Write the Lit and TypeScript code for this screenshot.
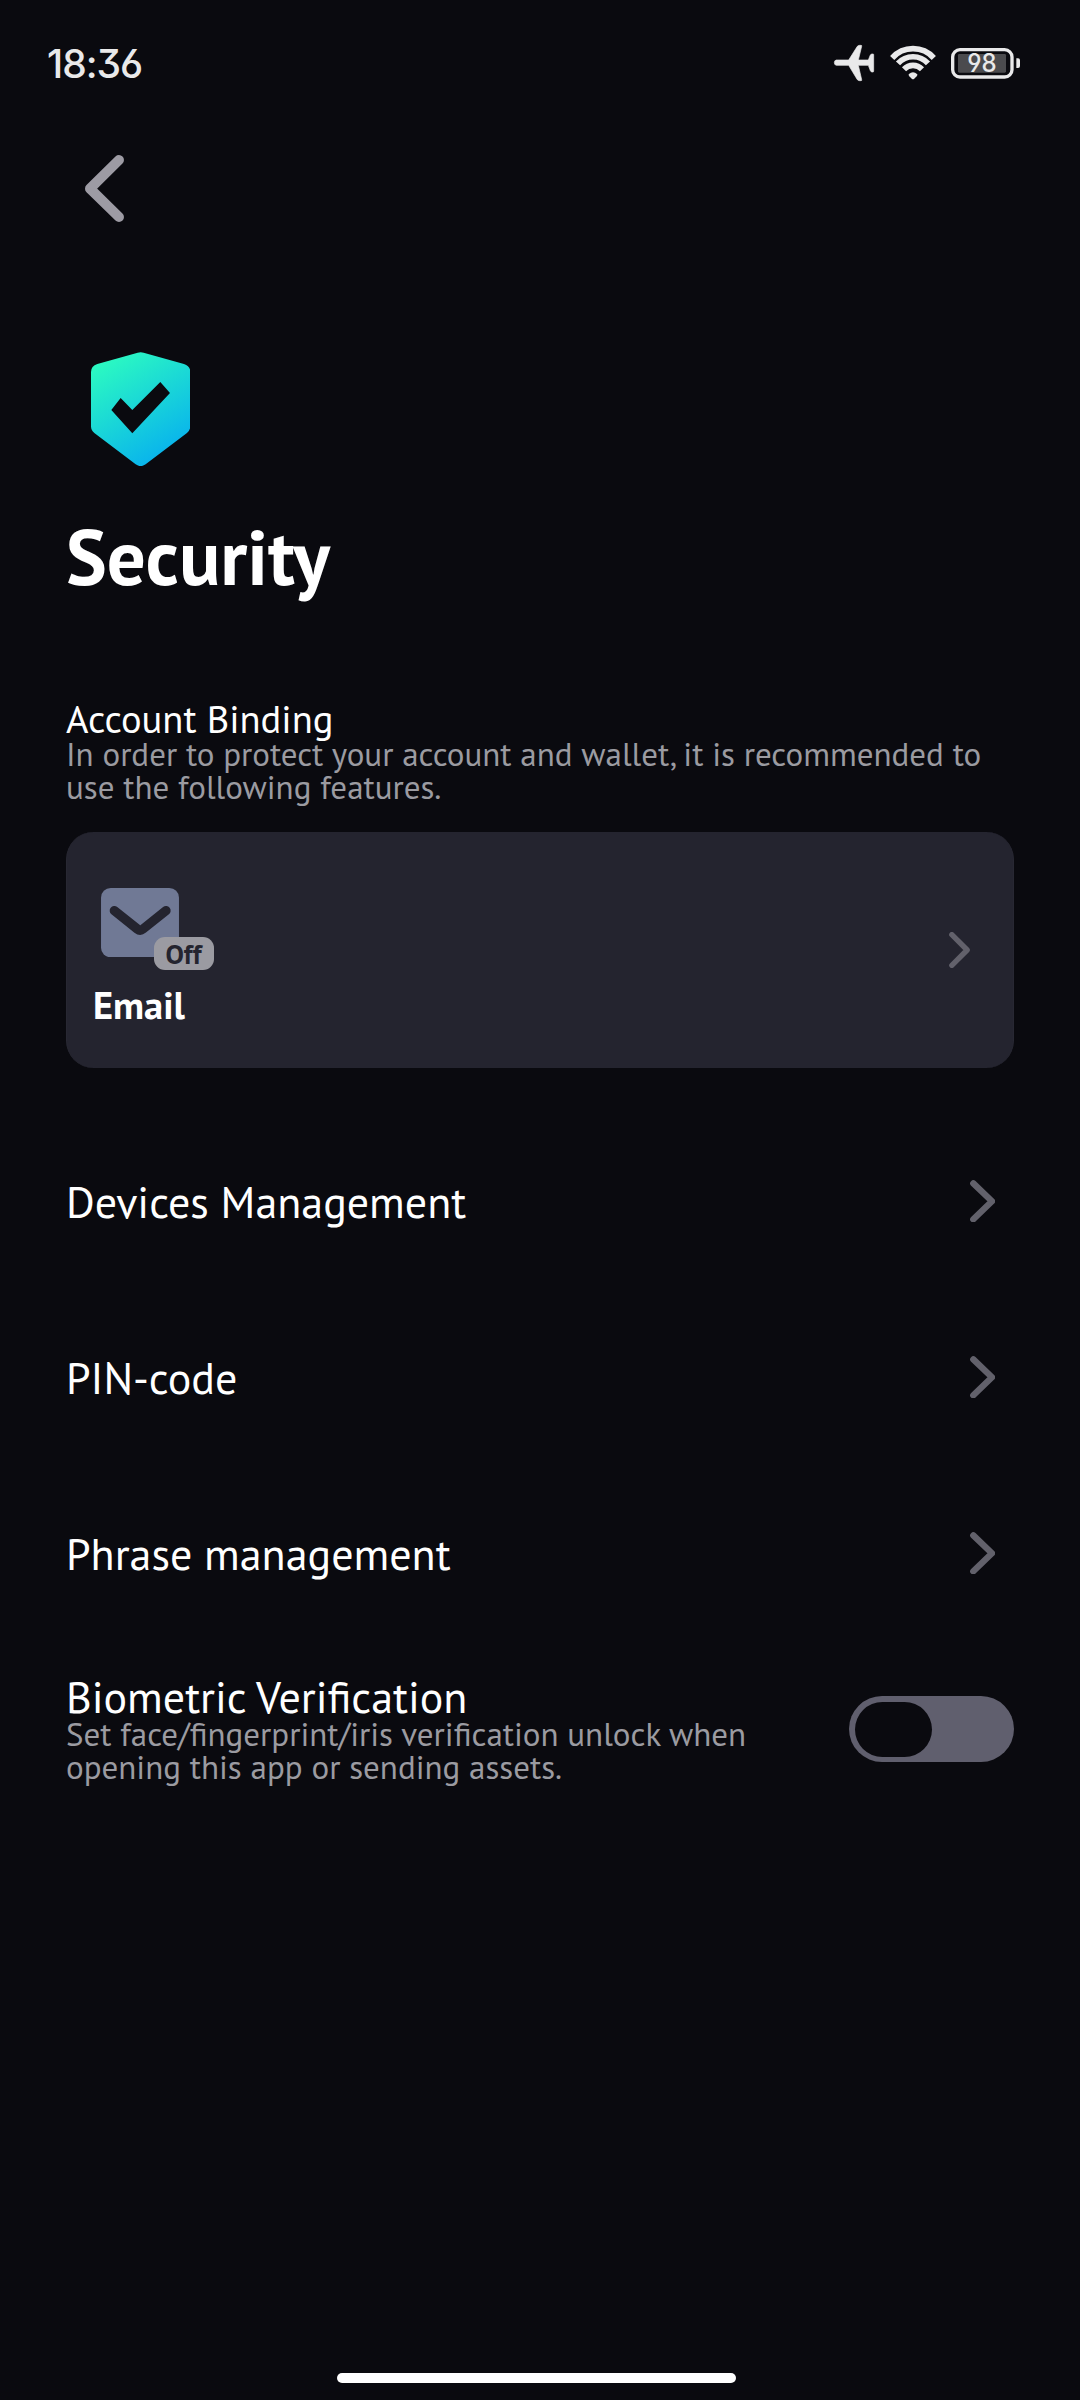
import { LitElement, html, css } from "lit";
import { customElement, property } from "lit/decorators.js";

@customElement("status-bar")
class StatusBar extends LitElement {
  static styles = css`
    :host {
      display: flex;
      align-items: center;
      justify-content: space-between;
      height: 126px;
      padding: 0 60px 0 47px;
      box-sizing: border-box;
      color: #e9e9ea;
      font-family: Inter, sans-serif;
    }
    .time {
      padding-top: 1px;
      font-size: 39px;
      line-height: 50px;
      font-weight: 500;
      letter-spacing: -1px;
      font-feature-settings: "cv03", "cv04", "cv09";
    }
    .icons {
      display: flex;
      align-items: center;
    }
    svg {
      display: block;
      overflow: visible;
    }
    .plane {
      margin-right: 16px;
    }
    .wifi {
      margin-right: 15px;
    }
    .level {
      font-size: 75px;
      font-weight: 500;
      font-feature-settings: "cv03", "cv04", "cv09";
    }
  `;

  render() {
    return html`
      <span class="time">18:36</span>
      <div class="icons">
        <svg class="plane" width="40" height="36" viewBox="102 75 120 108" fill="currentColor" stroke="currentColor" stroke-width="2">
          <path d="M109 120H146L172 79Q175 76 179 76H183Q186 76 185 79L175 120H205L211 105Q213 102 216 102H219Q221 102 221 104V153Q221 156 219 156H216Q213 156 211 152L205 136H175L185 179Q186 182 183 182H179Q175 182 172 179L146 136H109Q103 135 103 128Q103 121 109 120Z"/>
        </svg>
        <svg class="wifi" width="46" height="33.300" viewBox="270 80 138 100" fill="none" stroke="currentColor" stroke-width="17">
          <path d="M276.500 116A84 84 0 0 1 401.500 116"/>
          <path d="M294 132A61 61 0 0 1 384 132"/>
          <path d="M312 150A37 37 0 0 1 366 150"/>
          <path d="M326 165Q339 153 352 165Q353 168 350 171L342 179Q339 181 336 179L328 171Q325 168 326 165Z" fill="currentColor" stroke="none"/>
        </svg>
        <svg width="69" height="31" viewBox="453 83 207 93">
          <rect x="458" y="88" width="178" height="82" rx="22" fill="none" stroke="currentColor" stroke-width="10"/>
          <rect x="474" y="101" width="144" height="56" rx="4" fill="#4b4b4e"/>
          <path d="M649 114H654Q660 114 660 120V137Q660 143 654 143H649Z" fill="currentColor"/>
          <text class="level" x="546" y="156" text-anchor="middle" fill="currentColor" textLength="88" lengthAdjust="spacingAndGlyphs">98</text>
        </svg>
      </div>
    `;
  }
}

@customElement("nav-row")
class NavRow extends LitElement {
  @property() label = "";

  static styles = css`
    :host {
      display: flex;
      align-items: center;
      justify-content: space-between;
      height: 176px;
      padding-right: 19px;
    }
    .label {
      padding-top: 2px;
      font-size: 44px;
      line-height: 56px;
      color: #fff;
    }
    svg {
      display: block;
    }
  `;

  render() {
    return html`
      <span class="label">${this.label}</span>
      <svg width="25.300" height="42.700" viewBox="449 1079 76 128" fill="none" stroke="#62616b" stroke-width="19" stroke-linecap="round" stroke-linejoin="round">
        <path d="M459 1089L515 1143L459 1197"/>
      </svg>
    `;
  }
}

@customElement("app-root")
class AppRoot extends LitElement {
  static styles = css`
    :host {
      display: flex;
      flex-direction: column;
      height: 2400px;
      background: #0a0a0f;
      font-family: "PT Sans", "Noto Sans", sans-serif;
      color: #fff;
    }
    svg {
      display: block;
    }
    main {
      flex: 1;
      display: flex;
      flex-direction: column;
      padding: 0 66px;
    }
    .back {
      margin: 29px 0 0 19px;
    }
    .shield {
      margin: 129.700px 0 0 24.600px;
    }
    h1 {
      margin: 41px 0 0;
      font-size: 77px;
      line-height: 100px;
      font-weight: 700;
    }
    h2 {
      margin: 93px 0 0;
      font-size: 38.500px;
      line-height: 38px;
      font-weight: 400;
    }
    p {
      margin: -0.500px 0 0;
      font-size: 33px;
      line-height: 33px;
      color: #9b9ba1;
    }
    .card {
      display: flex;
      align-items: center;
      justify-content: space-between;
      box-sizing: border-box;
      height: 236px;
      margin-top: 28.800px;
      padding: 0 42.700px 0 26px;
      border-radius: 27.500px;
      background: #24242f;
      border: 1px solid #282833;
      border-width: 0 1px;
    }
    .method {
      display: flex;
      flex-direction: column;
      gap: 22.500px;
      padding-top: 17.500px;
    }
    .icon {
      position: relative;
      width: 78px;
      margin-left: 8.300px;
    }
    .badge {
      position: absolute;
      left: 52.700px;
      top: 48.500px;
      box-sizing: border-box;
      width: 60.500px;
      height: 33px;
      padding-right: 1.500px;
      border-radius: 11px;
      background: #9b9ba2;
      color: #24242f;
      font-size: 27.500px;
      line-height: 34px;
      font-weight: 700;
      text-align: center;
    }
    .name {
      font-size: 38.500px;
      line-height: 50px;
      font-weight: 700;
    }
    .rows {
      margin-top: 44.700px;
    }
    .setting {
      display: flex;
      align-items: center;
      justify-content: space-between;
      margin-top: 34px;
    }
    .setting h2 {
      margin: 0;
      font-size: 44px;
      line-height: 43px;
    }
    .toggle {
      box-sizing: border-box;
      width: 165px;
      height: 66px;
      padding: 5.500px;
      border-radius: 33px;
      background: #605f6e;
    }
    .thumb {
      width: 77px;
      height: 55px;
      border-radius: 27.500px;
      background: #0a0a0f;
    }
    .home {
      align-self: center;
      width: 399px;
      height: 10px;
      margin: 0 7px 17px 0;
      border-radius: 5px;
      background: #fff;
    }
  `;

  render() {
    return html`
      <status-bar></status-bar>
      <main>
        <svg class="back" width="39.300" height="67" viewBox="255 465 118 201" fill="none" stroke="#9d9ba4" stroke-width="30" stroke-linecap="round" stroke-linejoin="round">
          <path d="M357 480L270 566L357 651"/>
        </svg>
        <svg class="shield" width="99.300" height="114.300" viewBox="122 65 298 343">
          <defs>
            <linearGradient id="shield-fill" gradientUnits="userSpaceOnUse" x1="175" y1="85" x2="370" y2="390">
              <stop offset="0" stop-color="#2bf9c2"/>
              <stop offset="1" stop-color="#06aef0"/>
            </linearGradient>
          </defs>
          <path fill="url(#shield-fill)" d="M262 67Q271 64 280 67L401 101Q420 107 420 125V288Q420 300 410 308L286 402Q271 413 256 402L132 308Q122 300 122 288V125Q122 107 141 101Z"/>
          <path fill="#0a0a0f" d="M183 239L211 203L246 239L330 155L359 188L246 309Z"/>
        </svg>
        <h1>Security</h1>
        <h2>Account Binding</h2>
        <p>In order to protect your account and wallet, it is recommended to<br />use the following features.</p>
        <div class="card">
          <div class="method">
            <div class="icon">
              <svg width="78" height="69.300" viewBox="153 203 234 208">
                <rect x="153" y="203" width="234" height="208" rx="29" fill="#707995"/>
                <path d="M193 271L262 326Q270.500 333 279 326L348 271" fill="none" stroke="#24242f" stroke-width="28" stroke-linecap="round"/>
              </svg>
              <span class="badge">Off</span>
            </div>
            <span class="name">Email</span>
          </div>
          <svg width="21" height="36" viewBox="389 337 62 108" fill="none" stroke="#62616b" stroke-width="16" stroke-linecap="round" stroke-linejoin="round">
            <path d="M397 345L443 391L397 437"/>
          </svg>
        </div>
        <div class="rows">
          ${["Devices Management", "PIN-code", "Phrase management"].map(
            (label) => html`<nav-row label=${label}></nav-row>`
          )}
        </div>
        <div class="setting">
          <div>
            <h2>Biometric Verification</h2>
            <p>Set face/fingerprint/iris verification unlock when<br />opening this app or sending assets.</p>
          </div>
          <div class="toggle"><div class="thumb"></div></div>
        </div>
      </main>
      <div class="home"></div>
    `;
  }
}
